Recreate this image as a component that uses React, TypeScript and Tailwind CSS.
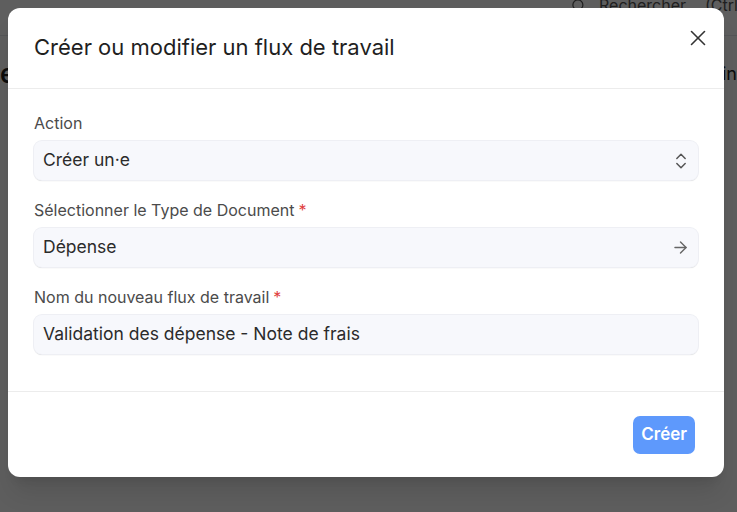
import { ChevronsUpDown, ArrowRight, X, Search } from 'lucide-react';

const font = { fontFamily: 'Inter, "Noto Sans", sans-serif' };

function Field({ label, required, value, icon }: { label: string; required?: boolean; value: string; icon?: React.ReactNode }) {
  return (
    <div className="flex flex-col gap-[9px]">
      <label className="text-[16px] leading-[18px] text-[#4b4b4b]">
        {label}
        {required && <span className="ml-1 text-[#e03e3e]">*</span>}
      </label>
      <div className="flex h-[39px] items-center justify-between rounded-lg bg-[#f7f8fc] px-[9px] shadow-[0_1px_1px_rgba(0,0,0,0.2)] ring-1 ring-[#eeeff4]">
        <span className="text-[17.5px] text-[#2b2b2b]">{value}</span>
        {icon}
      </div>
    </div>
  );
}

export default function App() {
  return (
    <div className="relative h-[512px] w-[737px] overflow-hidden bg-white" style={font}>
      {/* page behind the dialog */}
      <div className="flex h-[36px] items-start overflow-hidden whitespace-nowrap border-b border-gray-200 pl-[571px] text-[16px] text-[#555]">
        <div className="-mt-[7px] flex items-center">
          <Search size={15} />
          <span className="ml-[13px]">Rechercher</span>
          <span className="ml-[19px]">(Ctrl+K)</span>
        </div>
      </div>
      <div className="flex items-center justify-between pt-[18px] text-[26px] text-[#222]">
        <span className="font-semibold">e</span>
        <span className="text-[18px]">in</span>
      </div>

      <div className="absolute inset-0 bg-[rgba(0,0,0,0.63)]" />

      <div className="absolute left-[8px] top-[8px] flex h-[469px] w-[716px] flex-col rounded-[12px] bg-white shadow-xl">
        <div className="flex h-[81px] items-start justify-between border-b border-[#ececec] pl-[26px] pr-[13px]">
          <h2 className="pt-[25px] text-[22px] leading-[28px] text-[#1f1f1f]">Créer ou modifier un flux de travail</h2>
          <X size={26} strokeWidth={1.5} className="mt-[17px] text-[#333]" />
        </div>

        <div className="flex flex-1 flex-col gap-[21px] px-[26px] pt-[25px]">
          <Field label="Action" value="Créer un·e" icon={<ChevronsUpDown size={20} strokeWidth={1.8} className="-mr-[2px] text-[#555]" />} />
          <Field label="Sélectionner le Type de Document" required value="Dépense" icon={<ArrowRight size={19} strokeWidth={1.8} className="-mr-[1px] text-[#666]" />} />
          <Field label="Nom du nouveau flux de travail" required value="Validation des dépense - Note de frais" />
        </div>

        <div className="flex h-[86px] items-center justify-end border-t border-[#ececec] px-[29px]">
          <button className="h-[38px] rounded-[7px] bg-[#5e99fc] px-[8px] text-[17px] font-semibold text-white">Créer</button>
        </div>
      </div>
    </div>
  );
}
